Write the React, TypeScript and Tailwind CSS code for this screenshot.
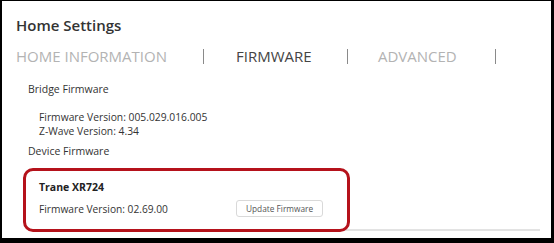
import React from "react";

function Bar() {
  return <div className="w-px h-[15px] bg-[#8a8a8a]" />;
}

export default function App() {
  return (
    <div
      className="w-[554px] h-[243px] bg-black border-l-2 border-t border-r-[3px] border-b-[5px] border-black"
      style={{ fontFamily: '"Open Sans", "Noto Sans", sans-serif' }}
    >
      <div className="relative w-full h-full bg-white text-[#333]">
        <div className="pl-[14px] pt-[14px] text-[15px] leading-[20px] font-semibold text-[#333]">
          Home Settings
        </div>
        <div className="flex items-center pl-[14px] mt-[11px] h-[20px] text-[15px] leading-[20px]">
          <span className="w-[187px] text-[#b3b3b3]">HOME INFORMATION</span>
          <Bar />
          <span className="w-[32px]" />
          <span className="w-[111px] text-[#444]">FIRMWARE</span>
          <Bar />
          <span className="w-[30px]" />
          <span className="w-[117px] text-[#b3b3b3]">ADVANCED</span>
          <Bar />
        </div>
        <div className="pl-[26px] mt-[16px] text-[10.5px] leading-[14px]">Bridge Firmware</div>
        <div className="pl-[37px] mt-[14px] text-[10.3px] leading-[14px]">
          <div>Firmware Version: 005.029.016.005</div>
          <div>Z-Wave Version: 4.34</div>
        </div>
        <div className="pl-[26px] mt-[6px] text-[10.5px] leading-[14px]">Device Firmware</div>
        <div className="pl-[37px] mt-[22px] text-[10.5px] leading-[14px] font-bold text-[#222]">Trane XR724</div>
        <div className="flex items-center pl-[37px] mt-[6px]">
          <span className="w-[197px] text-[10.2px] leading-[16px]">Firmware Version: 02.69.00</span>
          <button className="h-[17px] px-[9px] border border-[#d9d9d9] rounded-[3px] bg-white text-[8.3px] leading-[15px] text-[#555]">
            Update Firmware
          </button>
        </div>
        <div className="ml-[26px] mt-[12px] w-[512px] h-[2px] bg-[#e3e3e3]" />
        <div className="absolute left-[21px] top-[167px] w-[327px] h-[64px] border-[3px] border-[#b5121b] rounded-[10px]" />
      </div>
    </div>
  );
}
